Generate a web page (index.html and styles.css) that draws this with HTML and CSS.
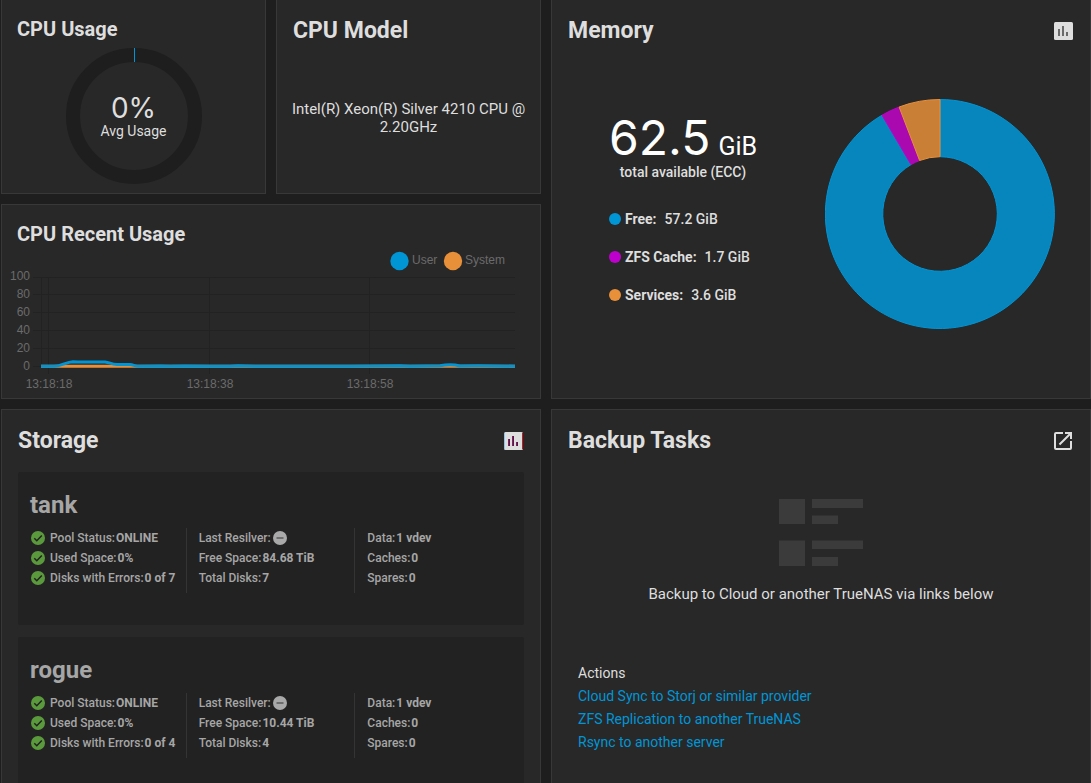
FILE: index.html
```html
<!DOCTYPE html>
<html lang="en">
<head>
<meta charset="utf-8">
<title>Dashboard</title>
<link rel="stylesheet" href="styles.css">
</head>
<body>
<svg class="sprite" aria-hidden="true">
  <symbol id="ok" viewBox="0 0 16 16">
    <circle cx="8" cy="8" r="7" fill="#5a9a3c"/>
    <path d="M4.3 8.3l2.5 2.5 5-5.2" fill="none" stroke="#222" stroke-width="1.5"/>
  </symbol>
  <symbol id="none" viewBox="0 0 16 16">
    <circle cx="8" cy="8" r="7" fill="#a9a9a9"/>
    <path d="M4.5 8h7" stroke="#5a5a5a" stroke-width="1.5"/>
  </symbol>
</svg>
<main class="dashboard">
  <div class="column">
    <div class="pair">
      <section class="card card-top card-compact">
        <h2 class="title title-small">CPU Usage</h2>
        <div class="gauge">
          <svg class="gauge-ring" viewBox="0 0 136 136" width="136" height="136" aria-hidden="true">
            <circle cx="68" cy="68" r="61" fill="none" stroke="#1e1e1e" stroke-width="14"/>
            <path d="M68.5 0v14" stroke="#0095d5" stroke-width="1"/>
          </svg>
          <div class="gauge-label">
            <span class="gauge-value">0%</span>
            <span class="gauge-caption">Avg Usage</span>
          </div>
        </div>
      </section>
      <section class="card card-top">
        <h2 class="title">CPU Model</h2>
        <p class="cpu-model">Intel(R) Xeon(R) Silver 4210 CPU @ 2.20GHz</p>
      </section>
    </div>
    <section class="card card-compact">
      <h2 class="title title-small">CPU Recent Usage</h2>
      <svg class="chart" viewBox="2 245 538 153" role="img" aria-label="CPU usage over time">
        <g stroke="#222222" fill="none">
          <path d="M33 277.5H515M33 294.5H515M33 312.5H515M33 330.5H515M33 348.5H515M33 366.5H515"/>
          <path d="M41.5 277V366M48.5 277V374M209.5 277V374M369.5 277V374"/>
        </g>
        <circle cx="399.5" cy="261" r="9.2" fill="#0095d5"/>
        <circle cx="453" cy="261" r="9.2" fill="#e88f3a"/>
        <g class="chart-text">
          <text x="412" y="264">User</text>
          <text x="465" y="264">System</text>
          <g text-anchor="end">
            <text x="30" y="280">100</text>
            <text x="30" y="298">80</text>
            <text x="30" y="316">60</text>
            <text x="30" y="334">40</text>
            <text x="30" y="352">20</text>
            <text x="30" y="370">0</text>
          </g>
          <g text-anchor="middle">
            <text x="49" y="388">13:18:18</text>
            <text x="210" y="388">13:18:38</text>
            <text x="370" y="388">13:18:58</text>
          </g>
        </g>
        <path d="M41 366.3H515" stroke="#e88f3a" stroke-width="3"/>
        <path d="M41 366.3H54C62 366 66 362 73 361.7L78 362H105C110 362.5 111 364.4 117 364.5H130C134 365 135 366.3 140 366.3L161 365.9L170 366.3L185 365.9L210 366.3H230L238 365.8L255 366.3H350L400 365.7L410 366.2L440 365.8Q451 363.8 460 366L478 365.8L515 366.2" fill="none" stroke="#0095d5" stroke-width="3"/>
      </svg>
    </section>
  </div>

  <section class="card card-top">
    <header class="card-head">
      <h2 class="title">Memory</h2>
      <button class="icon-button" type="button" aria-label="Memory report">
        <svg viewBox="0 0 24 24" width="24" height="24"><rect x="3" y="3" width="19" height="18" rx="1.5" fill="#dedede"/><path d="M8 10v7M12 7v10M16 13v4" stroke="#6a6a6a" stroke-width="2"/></svg>
      </button>
    </header>
    <div class="memory">
      <div class="memory-info">
        <div class="memory-total"><span class="memory-number">62.5</span><span>GiB</span></div>
        <div class="memory-caption">total available (ECC)</div>
        <ul class="legend">
          <li class="legend-item"><span class="dot dot-free"></span><b class="legend-name">Free:</b>57.2 GiB</li>
          <li class="legend-item"><span class="dot dot-cache"></span><b class="legend-name">ZFS Cache:</b>1.7 GiB</li>
          <li class="legend-item"><span class="dot dot-services"></span><b class="legend-name">Services:</b>3.6 GiB</li>
        </ul>
      </div>
      <svg class="donut" viewBox="-115 -115 230 230" width="230" height="230" role="img" aria-label="Memory use">
        <path d="M0-114.5A114.5 114.5 0 1 1-58-98.8L-29-49.4A57.3 57.3 0 1 0 0-57.3Z" fill="#0786bd" stroke="#0095d5"/>
        <path d="M-58-98.8A114.5 114.5 0 0 1-40.9-107L-20.4-53.5A57.3 57.3 0 0 0-29-49.4Z" fill="#aa09b0" stroke="#be00cc"/>
        <path d="M-40.9-107A114.5 114.5 0 0 1 0-114.5V-57.3A57.3 57.3 0 0 0-20.4-53.5Z" fill="#c97f36" stroke="#e88f3a"/>
      </svg>
    </div>
  </section>

  <section class="card card-last">
    <header class="card-head">
      <h2 class="title">Storage</h2>
      <button class="icon-button" type="button" aria-label="Storage report">
        <svg viewBox="0 0 24 24" width="24" height="24"><rect x="3" y="3" width="19" height="18" rx="1.5" fill="#dedede"/><path d="M3.5 4v16" stroke="#8fc4ee"/><path d="M21.5 4v16" stroke="#c01a20"/><path d="M7.5 10v7M11.5 7v10M15.5 13v4" stroke="#b0141c"/><path d="M8.5 10v7M12.5 7v10M16.5 13v4" stroke="#24248c"/></svg>
      </button>
    </header>
    <div class="pools">
      <article class="pool">
        <h3 class="pool-name">tank</h3>
        <div class="pool-grid">
          <ul class="pool-col">
            <li class="pool-row"><svg class="state state-lead"><use href="#ok"/></svg>Pool Status: <b>ONLINE</b></li>
            <li class="pool-row"><svg class="state state-lead"><use href="#ok"/></svg>Used Space: <b>0%</b></li>
            <li class="pool-row"><svg class="state state-lead"><use href="#ok"/></svg>Disks with Errors: <b>0 of 7</b></li>
          </ul>
          <ul class="pool-col">
            <li class="pool-row">Last Resilver: <svg class="state"><use href="#none"/></svg></li>
            <li class="pool-row">Free Space: <b>84.68 TiB</b></li>
            <li class="pool-row">Total Disks: <b>7</b></li>
          </ul>
          <ul class="pool-col">
            <li class="pool-row">Data: <b>1 vdev</b></li>
            <li class="pool-row">Caches: <b>0</b></li>
            <li class="pool-row">Spares: <b>0</b></li>
          </ul>
        </div>
      </article>
      <article class="pool">
        <h3 class="pool-name">rogue</h3>
        <div class="pool-grid">
          <ul class="pool-col">
            <li class="pool-row"><svg class="state state-lead"><use href="#ok"/></svg>Pool Status: <b>ONLINE</b></li>
            <li class="pool-row"><svg class="state state-lead"><use href="#ok"/></svg>Used Space: <b>0%</b></li>
            <li class="pool-row"><svg class="state state-lead"><use href="#ok"/></svg>Disks with Errors: <b>0 of 4</b></li>
          </ul>
          <ul class="pool-col">
            <li class="pool-row">Last Resilver: <svg class="state"><use href="#none"/></svg></li>
            <li class="pool-row">Free Space: <b>10.44 TiB</b></li>
            <li class="pool-row">Total Disks: <b>4</b></li>
          </ul>
          <ul class="pool-col">
            <li class="pool-row">Data: <b>1 vdev</b></li>
            <li class="pool-row">Caches: <b>0</b></li>
            <li class="pool-row">Spares: <b>0</b></li>
          </ul>
        </div>
      </article>
    </div>
  </section>

  <section class="card card-last">
    <header class="card-head">
      <h2 class="title">Backup Tasks</h2>
      <button class="icon-button" type="button" aria-label="Open backup tasks">
        <svg viewBox="0 0 24 24" width="24" height="24"><path d="M19 19H5V5h7V3H5a2 2 0 0 0-2 2v14a2 2 0 0 0 2 2h14a2 2 0 0 0 2-2v-7h-2v7zM14 3v2h3.590l-9.830 9.830 1.410 1.410L19 6.410V10h2V3h-7z" fill="#dedede"/></svg>
      </button>
    </header>
    <div class="backup-empty">
      <svg viewBox="0 0 84 67" width="84" height="67" fill="#3b3b3b" aria-hidden="true">
        <path d="M0 0h26v25H0zM33 0h51v9H33zM33 16.500h26v8.500H33zM0 41.500h26V67H0zM33 41.500h51V50H33zM33 58h26v9H33z"/>
      </svg>
      <p class="backup-text">Backup to Cloud or another TrueNAS via links below</p>
    </div>
    <nav class="actions">
      <span>Actions</span>
      <a class="action" href="#cloud">Cloud Sync to Storj or similar provider</a>
      <a class="action" href="#replication">ZFS Replication to another TrueNAS</a>
      <a class="action" href="#rsync">Rsync to another server</a>
    </nav>
  </section>
</main>
</body>
</html>
```
FILE: styles.css
```css
* { box-sizing: border-box; }

html { scrollbar-width: none; }

body {
  margin: 0;
  background: #1e1e1e;
  color: #dedede;
  font-family: Roboto, "Liberation Sans", sans-serif;
  font-size: 14px;
}

h2, h3, p, ul { margin: 0; padding: 0; }
ul { list-style: none; }

.sprite { display: none; }

.dashboard {
  display: grid;
  grid-template-columns: minmax(0, 1fr) minmax(0, 1fr);
  grid-template-rows: auto 1fr;
  gap: 10px;
  min-height: 100vh;
  padding-left: 1px;
}

.column { display: flex; flex-direction: column; gap: 10px; }
.pair { display: grid; grid-template-columns: 1fr 1fr; gap: 10px; }

.card {
  display: flex;
  flex-direction: column;
  padding-top: 19px;
  background: #282828;
  border: 1px solid #383838;
}
.card-compact { padding-top: 18px; }
.card-top { border-top: 0; }
.card-last { border-bottom: 0; }

.card-head {
  display: flex;
  align-items: center;
  justify-content: space-between;
  padding-right: 15px;
}

.title {
  padding: 0 16px;
  font-size: 23px;
  line-height: 24px;
  font-weight: 700;
}
.title-small { padding: 0 15px; font-size: 20px; line-height: 22px; }

.icon-button {
  width: 24px;
  height: 24px;
  padding: 0;
  border: 0;
  background: none;
  cursor: pointer;
}
.icon-button svg { display: block; }

.gauge {
  display: grid;
  place-items: center;
  padding: 8px 0 9px;
}
.gauge-ring, .gauge-label { grid-area: 1 / 1; }
.gauge-label { display: flex; flex-direction: column; align-items: center; }
.gauge-value { font-family: Inter, "Noto Sans", sans-serif; font-size: 28px; line-height: 30px; }
.gauge-caption { line-height: 16px; }

.cpu-model {
  display: flex;
  flex: 1;
  align-items: center;
  padding: 0 10px;
  font-size: 15px;
  line-height: 18px;
  text-align: center;
}

.chart { display: block; width: 100%; }
.chart-text { fill: #6b6b6b; font-family: "Liberation Sans", sans-serif; font-size: 12px; }

.memory {
  display: flex;
  align-items: flex-start;
  justify-content: space-between;
  padding: 56px 35px 0 57px;
}
.memory-info { padding-top: 15px; }
.memory-total {
  display: flex;
  align-items: baseline;
  gap: 8px;
  height: 48px;
  color: #fff;
  font-size: 25px;
  line-height: 30px;
}
.memory-number { font-family: Inter, "Noto Sans", sans-serif; font-size: 48px; line-height: 48px; }
.memory-caption { line-height: 20px; font-weight: 500; text-align: center; }

.legend { display: grid; gap: 18px; margin-top: 27px; font-weight: 500; }
.legend-item { display: flex; align-items: center; line-height: 20px; }
.legend-name { margin: 0 8px 0 4px; }
.dot { width: 12px; height: 12px; border-radius: 50%; }
.dot-free { background: #0095d5; }
.dot-cache { background: #be00cc; }
.dot-services { background: #e88f3a; }

.pools { display: grid; gap: 12px; padding: 19px 16px 0; }
.pool {
  padding: 19px 0 32px;
  border-radius: 2px;
  background: #222222;
  color: #a6a6a6;
}
.pool-name { padding: 0 12px; font-size: 24px; line-height: 28px; }
.pool-grid { display: grid; grid-template-columns: repeat(3, 1fr); margin-top: 9px; }
.pool-col {
  min-height: 65px;
  padding-left: 12px;
  border-right: 1px solid #343434;
  font-size: 12px;
  font-weight: 500;
}
.pool-col:last-child { border-right: 0; }
.pool-row { display: flex; align-items: center; gap: 1px; line-height: 20px; white-space: nowrap; }
.state { width: 16px; height: 16px; }
.state-lead { margin-right: 3px; }

.backup-empty {
  display: flex;
  flex-direction: column;
  align-items: center;
  gap: 18px;
  padding-top: 46px;
}
.backup-text { font-size: 15px; line-height: 20px; }

.actions {
  display: flex;
  flex-direction: column;
  align-items: flex-start;
  padding: 58px 26px 0;
  line-height: 23px;
}
.action { color: #0095d5; text-decoration: none; }
```
